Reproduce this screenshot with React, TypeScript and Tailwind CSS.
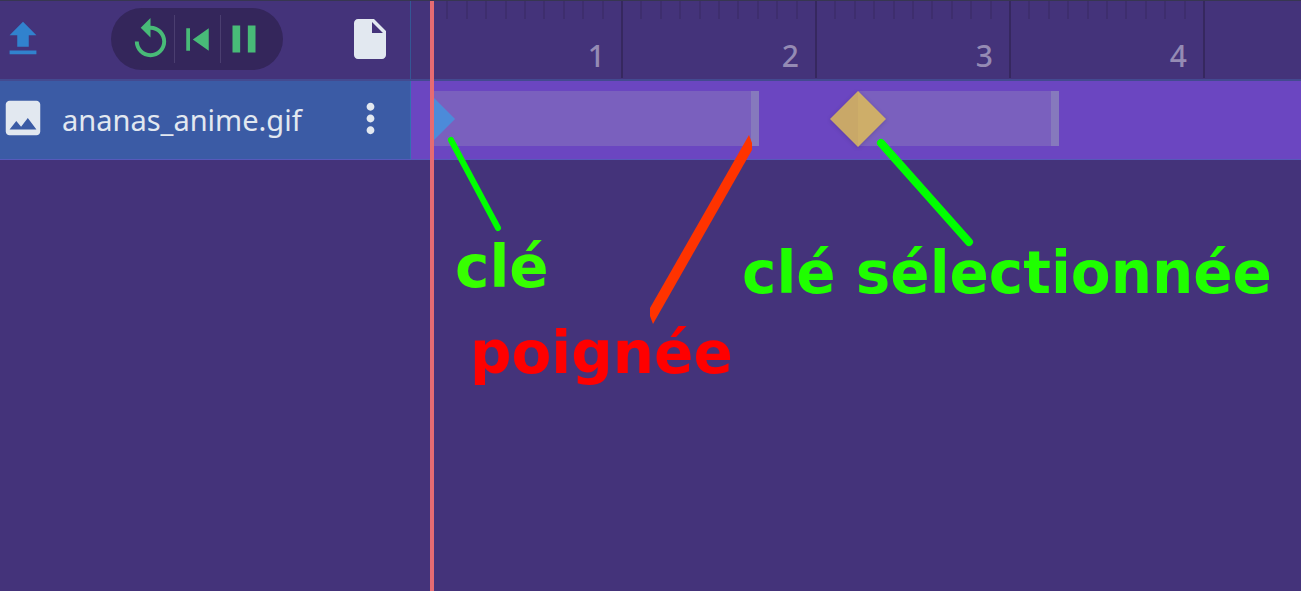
import type { ReactNode } from "react";

type IconProps = { d: string; className: string };

const ICONS = {
  upload: "M5 20h14v-2H5v2zM5 10h4v6h6v-6h4l-7-7-7 7z",
  replay:
    "M12 5V1L7 6l5 5V7c3.31 0 6 2.69 6 6s-2.69 6-6 6-6-2.69-6-6H4c0 4.42 3.58 8 8 8s8-3.58 8-8-3.58-8-8-8z",
  previous: "M6 6h2v12H6zm3.5 6l8.5 6V6z",
  pause: "M6 19h4V5H6v14zm8-14v14h4V5h-4z",
  file: "M6 2c-1.1 0-1.99.9-1.99 2L4 20c0 1.1.89 2 1.99 2H18c1.1 0 2-.9 2-2V8l-6-6H6zm7 7V3.5L18.5 9H13z",
  image:
    "M21 19V5c0-1.1-.9-2-2-2H5c-1.1 0-2 .9-2 2v14c0 1.1.9 2 2 2h14c1.1 0 2-.9 2-2zM8.5 13.5l2.5 3.01L14.5 12l4.5 6H5l3.5-4.5z",
  more: "M12 8c1.1 0 2-.9 2-2s-.9-2-2-2-2 .9-2 2 .9 2 2 2zm0 2c-1.1 0-2 .9-2 2s.9 2 2 2 2-.9 2-2-.9-2-2-2zm0 6c-1.1 0-2 .9-2 2s.9 2 2 2 2-.9 2-2-.9-2-2-2z",
};

function Icon({ d, className }: IconProps) {
  return (
    <svg viewBox="0 0 24 24" fill="currentColor" aria-hidden="true" className={className}>
      <path d={d} />
    </svg>
  );
}

function IconButton({ label, className, children }: { label: string; className: string; children: ReactNode }) {
  return (
    <button type="button" aria-label={label} className={className}>
      {children}
    </button>
  );
}

function Toolbar() {
  return (
    <div className="flex w-[411px] shrink-0 items-center border-r border-[#345794] pr-4 pb-[2px]">
      <IconButton label="Importer" className="text-[#3182ce]">
        <Icon d={ICONS.upload} className="size-[46px]" />
      </IconButton>
      <div className="ml-[65px] flex h-[62px] items-center rounded-full bg-[#34265b] px-4 text-[#48bb78]">
        <IconButton label="Rejouer" className="">
          <Icon d={ICONS.replay} className="size-[47px]" />
        </IconButton>
        <span className="h-12 w-px bg-[#4b3e70]" />
        <IconButton label="Début" className="">
          <Icon d={ICONS.previous} className="size-[45px]" />
        </IconButton>
        <span className="h-12 w-px bg-[#4b3e70]" />
        <IconButton label="Pause" className="">
          <Icon d={ICONS.pause} className="size-[46px]" />
        </IconButton>
      </div>
      <IconButton label="Nouveau fichier" className="ml-auto text-[#e2e8f0]">
        <Icon d={ICONS.file} className="size-12" />
      </IconButton>
    </div>
  );
}

function Ruler() {
  return (
    <div className="flex flex-1 overflow-hidden pl-[18px]">
      {[1, 2, 3, 4].map((second) => (
        <div key={second} className="flex h-[77px] w-[194px] shrink-0 flex-col justify-between border-r-2 border-[#36285f]">
          <div className="flex h-[18px]">
            {[0, 1, 2, 3, 4, 5, 6, 7, 8].map((tick) => (
              <span key={tick} className="flex-1 border-r-2 border-[#3e2e6e]" />
            ))}
            <span className="flex-1" />
          </div>
          <span className="pr-4 text-right text-[30px] leading-11 font-medium text-[#958bb4]">{second}</span>
        </div>
      ))}
    </div>
  );
}

function Track() {
  return (
    <div className="flex flex-1 items-start overflow-hidden bg-[#6b46c1] pt-[10px] pl-[21px]">
      <div className="relative flex h-[55px] w-[327px] shrink-0 justify-end overflow-hidden bg-[#7a60be]">
        <svg viewBox="0 0 23 44" className="absolute top-[6px] left-0 h-11 w-[23px]" aria-hidden="true">
          <path d="M0 0L1 0L23 22L1 44L0 44z" fill="#4c8bd9" />
        </svg>
        <span className="h-full w-2 bg-[#8679bd]" />
      </div>
      <div className="relative ml-[99px] flex h-[55px] w-[201px] shrink-0 justify-end bg-[#7a60be]">
        <svg viewBox="0 0 56 56" className="absolute top-0 left-[-28px] size-14 drop-shadow-sm" aria-hidden="true">
          <path d="M28 0L0 28L28 56z" fill="#c9a868" />
          <path d="M28 0L56 28L28 56z" fill="#ceae69" />
        </svg>
        <span className="h-full w-2 bg-[#8679bd]" />
      </div>
    </div>
  );
}

function Annotations() {
  return (
    <div className="pointer-events-none absolute inset-0 text-[58px] leading-none font-bold whitespace-nowrap [font-family:'DejaVu_Sans',sans-serif]">
      <svg className="absolute inset-0 size-full" aria-hidden="true">
        <path d="M451 139L498 227" stroke="#00ff00" strokeWidth="6" strokeLinecap="round" />
        <path d="M881 142L969 241" stroke="#00ff00" strokeWidth="8" strokeLinecap="round" />
        <path d="M749 134L752 142L752 149L653 323L650 315L650 307z" fill="#ff3300" />
      </svg>
      <span className="absolute top-[237px] left-[455px] text-[#37ff00]">clé</span>
      <span className="absolute top-[323px] left-[470px] text-[#ff0000]">poignée</span>
      <span className="absolute top-[243px] left-[742px] text-[#1fff00]">clé sélectionnée</span>
    </div>
  );
}

export default function App() {
  return (
    <div className="h-screen bg-white pr-[15px] pb-[5px] [font-family:'Noto_Sans',sans-serif]">
      <main className="relative flex h-full flex-col overflow-hidden border-t border-[#373651] bg-[#44337a]">
        <header className="flex h-20 shrink-0 border-b-2 border-[#434a90]">
          <Toolbar />
          <Ruler />
        </header>
        <section className="flex h-[79px] shrink-0 border-b border-[#5759bb]">
          <div className="flex w-[411px] shrink-0 items-center border-r border-[#3271b0] bg-[#3b5ba5] pr-4 pb-1 text-[#e2e8f0]">
            <Icon d={ICONS.image} className="size-[46px] shrink-0" />
            <span className="ml-4 flex-1 pt-1 text-[29px] leading-10">ananas_anime.gif</span>
            <IconButton label="Options" className="">
              <Icon d={ICONS.more} className="size-[47px]" />
            </IconButton>
          </div>
          <Track />
        </section>
        <div className="absolute inset-y-0 left-[430px] w-1 bg-[#e56b72]" />
        <Annotations />
      </main>
    </div>
  );
}
